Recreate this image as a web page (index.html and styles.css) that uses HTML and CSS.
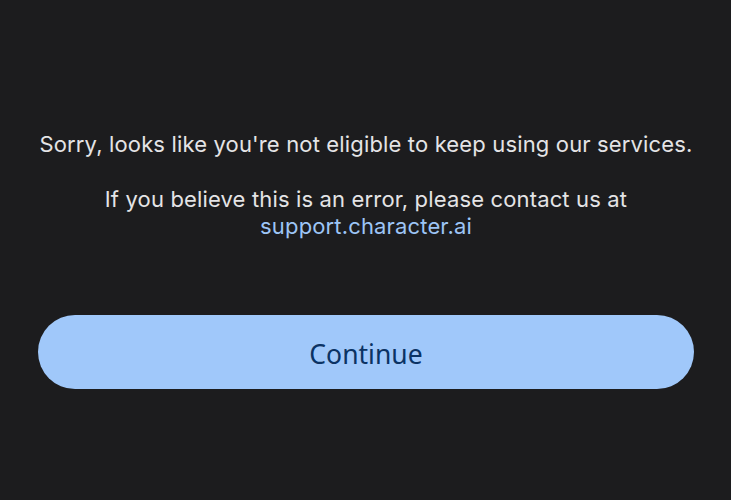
FILE: index.html
```html
<!DOCTYPE html>
<html>
<head>
<meta charset="utf-8">
<link rel="stylesheet" href="styles.css">
</head>
<body>
<main class="screen">
  <section class="message">
    <p class="line">Sorry, looks like you're not eligible to keep using our services.</p>
    <p class="line second">If you believe this is an error, please contact us at<br><a class="link" href="#">support.character.ai</a></p>
  </section>
  <button class="continue">Continue</button>
</main>
</body>
</html>
```
FILE: styles.css
```css
html, body {
  margin: 0;
  padding: 0;
  background: #1c1c1e;
  width: 731px;
  height: 500px;
  overflow: hidden;
}
.screen {
  display: flex;
  flex-direction: column;
  padding: 131px 37px 0 38px;
  font-family: "Inter", "Noto Sans", sans-serif;
}
.message {
  display: flex;
  flex-direction: column;
  align-items: center;
  text-align: center;
  color: #e4e4e6;
  font-size: 22px;
  letter-spacing: 0.15px;
  line-height: 27px;
}
.line {
  margin: 0;
  white-space: nowrap;
}
.second {
  margin-top: 28px;
}
.link {
  color: #9dc5f6;
  text-decoration: none;
}
.continue {
  margin-top: 75px;
  height: 74px;
  border: none;
  border-radius: 40px;
  background: #a0c8fa;
  color: #0b3364;
  font-family: "Noto Sans", "Open Sans", sans-serif;
  font-size: 26.5px;
  padding: 3px 0 0 0;
}
```
